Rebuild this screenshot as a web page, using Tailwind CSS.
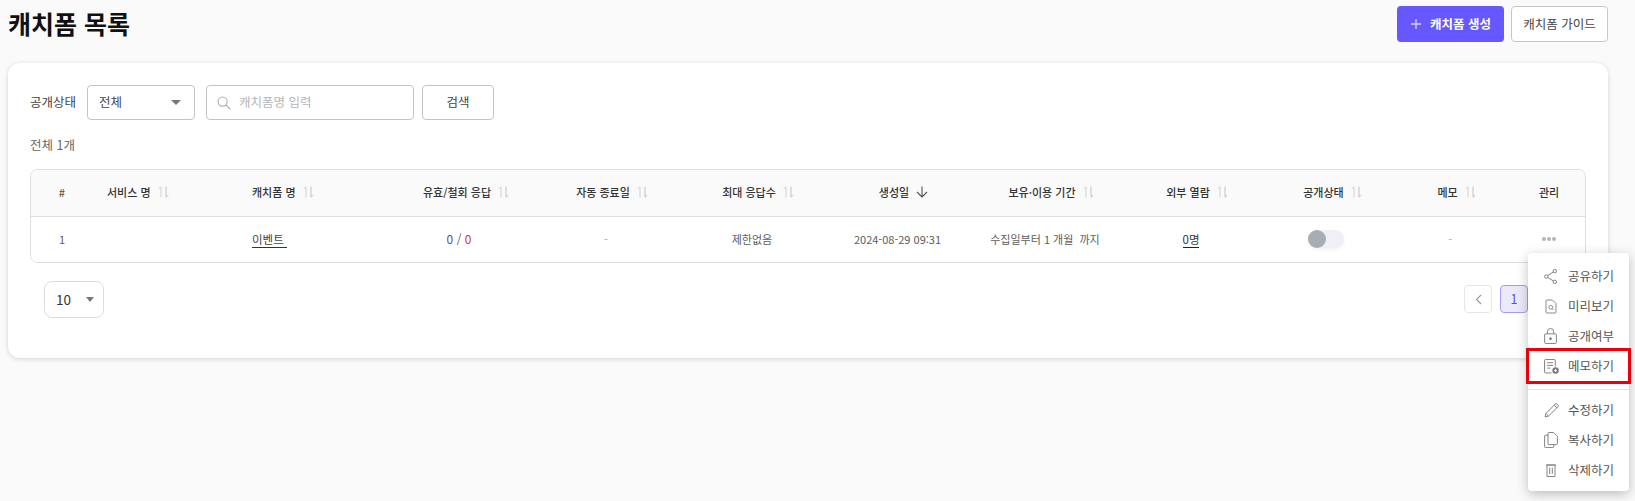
<!DOCTYPE html>
<html lang="ko">
<head>
<meta charset="utf-8">
<script src="https://cdn.jsdelivr.net/npm/@tailwindcss/browser@4"></script>
</head>
<body class="bg-[#fafafa] font-['Noto_Sans_CJK_KR','Noto_Sans',sans-serif] text-[#333]">
<div class="relative w-[1635px] h-[501px] overflow-hidden">
  <div class="pl-2 pr-[27px] pt-[6px]">
    <header class="flex justify-between h-[36px]">
      <h1 class="text-[25px] leading-[36px] font-bold text-[#111] mt-[-1px]">캐치폼 목록</h1>
      <div class="flex gap-[7px]">
        <button class="w-[107px] h-[36px] rounded bg-[#6657ff] text-white text-[12.5px] font-bold flex items-center justify-center gap-[8px]">
          <svg width="12" height="12" viewBox="0 0 12 12" fill="none" stroke="#d9d5ff" stroke-width="1.3"><path d="M6 1v10M1 6h10"/></svg>
          <span>캐치폼 생성</span>
        </button>
        <button class="w-[97px] h-[36px] rounded border border-[#c8c8c8] bg-white text-[12.5px] text-[#444]">캐치폼 가이드</button>
      </div>
    </header>
    <main class="mt-[21px] h-[295px] rounded-xl bg-white shadow-[0_1px_5px_rgba(0,0,0,0.16)] pt-[22px] pl-[22px] pr-[22px]">
      <div class="flex items-center h-[35px]">
        <span class="text-[12.5px] text-[#444] w-[57px]">공개상태</span>
        <div class="w-[108px] h-[35px] rounded border border-[#c4c4c4] flex items-center justify-between pl-[11px] pr-[13px] text-[12.5px] text-[#444]">
          <span>전체</span>
          <span class="w-0 h-0 border-x-[5px] border-x-transparent border-t-[5px] border-t-[#777]"></span>
        </div>
        <div class="ml-[11px] w-[208px] h-[35px] rounded border border-[#c4c4c4] flex items-center pl-[10px] gap-[8px] text-[12.5px] text-[#b5b5b5]">
          <svg width="14" height="14" viewBox="0 0 14 14" fill="none" stroke="#aaa" stroke-width="1.1"><circle cx="5.6" cy="5.6" r="4.6"/><path d="M9 9l4.4 4.4"/></svg>
          <span>캐치폼명 입력</span>
        </div>
        <button class="ml-2 w-[72px] h-[35px] rounded border border-[#c4c4c4] text-[12.5px] text-[#444]">검색</button>
      </div>
      <p class="mt-[15px] text-[12.5px] leading-[20px] text-[#666]">전체 1개</p>
      <div class="mt-[14px] w-[1556px] h-[94px] rounded-lg border border-[#dedede] overflow-hidden">
        <div class="h-[47px] pb-[2px] bg-[#fafafa] border-b border-[#dedede] shadow-[0_2px_4px_rgba(0,0,0,0.03)] grid grid-cols-[62px_147px_147px_144px_150px_142px_149px_146px_146px_125px_123px_74px] items-center text-[11px] font-medium text-[#333]">
          <div class="text-center text-[#555]">#</div>
          <div class="flex items-center gap-[7px] pl-[14px]"><span>서비스 명</span>
            <svg width="11" height="12" viewBox="0 0 11 12" fill="none" stroke-width="1"><path d="M3 11.5V.8L.6 3" stroke="#d0d0d0"/><path d="M8 .5v10.7l2.4-2.2" stroke="#c2c2c2"/></svg></div>
          <div class="flex items-center gap-[7px] pl-[12px]"><span>캐치폼 명</span>
            <svg width="11" height="12" viewBox="0 0 11 12" fill="none" stroke-width="1"><path d="M3 11.5V.8L.6 3" stroke="#d0d0d0"/><path d="M8 .5v10.7l2.4-2.2" stroke="#c2c2c2"/></svg></div>
          <div class="flex items-center justify-center gap-[7px] pl-[14px]"><span>유효/철회 응답</span>
            <svg width="11" height="12" viewBox="0 0 11 12" fill="none" stroke-width="1"><path d="M3 11.5V.8L.6 3" stroke="#d0d0d0"/><path d="M8 .5v10.7l2.4-2.2" stroke="#c2c2c2"/></svg></div>
          <div class="flex items-center justify-center gap-[7px] pl-[12px]"><span>자동 종료일</span>
            <svg width="11" height="12" viewBox="0 0 11 12" fill="none" stroke-width="1"><path d="M3 11.5V.8L.6 3" stroke="#d0d0d0"/><path d="M8 .5v10.7l2.4-2.2" stroke="#c2c2c2"/></svg></div>
          <div class="flex items-center justify-center gap-[7px] pl-[12px]"><span>최대 응답수</span>
            <svg width="11" height="12" viewBox="0 0 11 12" fill="none" stroke-width="1"><path d="M3 11.5V.8L.6 3" stroke="#d0d0d0"/><path d="M8 .5v10.7l2.4-2.2" stroke="#c2c2c2"/></svg></div>
          <div class="flex items-center justify-center gap-[7px] pl-[12px]"><span>생성일</span>
            <svg width="12" height="12" viewBox="0 0 12 12" fill="none" stroke="#555" stroke-width="1.1"><path d="M6 .5v10.5M1 6l5 5 5-5"/></svg></div>
          <div class="flex items-center justify-center gap-[7px] pl-[12px]"><span>보유·이용 기간</span>
            <svg width="11" height="12" viewBox="0 0 11 12" fill="none" stroke-width="1"><path d="M3 11.5V.8L.6 3" stroke="#d0d0d0"/><path d="M8 .5v10.7l2.4-2.2" stroke="#c2c2c2"/></svg></div>
          <div class="flex items-center justify-center gap-[7px] pl-[12px]"><span>외부 열람</span>
            <svg width="11" height="12" viewBox="0 0 11 12" fill="none" stroke-width="1"><path d="M3 11.5V.8L.6 3" stroke="#d0d0d0"/><path d="M8 .5v10.7l2.4-2.2" stroke="#c2c2c2"/></svg></div>
          <div class="flex items-center justify-center gap-[7px] pl-[12px]"><span>공개상태</span>
            <svg width="11" height="12" viewBox="0 0 11 12" fill="none" stroke-width="1"><path d="M3 11.5V.8L.6 3" stroke="#d0d0d0"/><path d="M8 .5v10.7l2.4-2.2" stroke="#c2c2c2"/></svg></div>
          <div class="flex items-center justify-center gap-[7px] pl-[12px]"><span>메모</span>
            <svg width="11" height="12" viewBox="0 0 11 12" fill="none" stroke-width="1"><path d="M3 11.5V.8L.6 3" stroke="#d0d0d0"/><path d="M8 .5v10.7l2.4-2.2" stroke="#c2c2c2"/></svg></div>
          <div class="text-center">관리</div>
        </div>
        <div class="h-[45px] pb-[1px] bg-white grid grid-cols-[62px_147px_147px_144px_150px_142px_149px_146px_146px_125px_123px_74px] items-center text-[11px] text-[#5c5c5c]">
          <div class="text-center">1</div>
          <div></div>
          <div class="pl-[12px]"><span class="text-[11.5px] text-[#444] border-b border-[#333] pr-[3px] leading-[15px] inline-block">이벤트</span></div>
          <div class="text-center text-[12px]">0 / <span class="text-[#d0383c]">0</span></div>
          <div class="text-center text-[#aaa]">-</div>
          <div class="text-center">제한없음</div>
          <div class="text-center">2024-08-29 09:31</div>
          <div class="text-center">수집일부터 1 개월&nbsp; 까지</div>
          <div class="text-center"><span class="text-[11.5px] text-[#333] border-b border-[#222] inline-block leading-[15px]">0명</span></div>
          <div class="flex justify-center pr-[2px]"><div class="w-[36px] h-[18px] rounded-full bg-[#eff0f3] shadow-[0_2px_4px_rgba(0,0,0,0.05)]"><div class="w-[18px] h-[18px] rounded-full bg-[#a8acb6]"></div></div></div>
          <div class="text-center text-[#aaa]">-</div>
          <div class="flex justify-center gap-[1.5px]"><i class="w-[3.5px] h-[3.5px] rounded-full bg-[#b5b5b5]"></i><i class="w-[3.5px] h-[3.5px] rounded-full bg-[#b5b5b5]"></i><i class="w-[3.5px] h-[3.5px] rounded-full bg-[#b5b5b5]"></i></div>
        </div>
      </div>
      <div class="mt-[18px] flex justify-between pl-[14px] w-[1556px]">
        <div class="w-[60px] h-[37px] rounded-lg border border-[#dcdcdc] flex items-center justify-between pl-[11px] pr-[9px] text-[13.5px] text-[#333]">
          <span>10</span>
          <span class="w-0 h-0 border-x-[4.5px] border-x-transparent border-t-[5px] border-t-[#777]"></span>
        </div>
        <div class="flex gap-2 mt-1 mr-[22px]">
          <div class="w-[28px] h-[28px] rounded border border-[#e6e6e6] flex items-center justify-center">
            <svg width="7" height="11" viewBox="0 0 7 11" fill="none" stroke="#999" stroke-width="1.1"><path d="M6 1L1.5 5.5 6 10"/></svg>
          </div>
          <div class="w-[28px] h-[28px] rounded border border-[#a99cf0] bg-[#ece9fb] text-[#5b4fe0] text-[12.5px] flex items-center justify-center">1</div>
          <div class="w-[28px] h-[28px]"></div>
        </div>
      </div>
    </main>
  </div>

  <div class="absolute left-[1528px] top-[253px] w-[101px] h-[238px] rounded bg-white shadow-[0_3px_12px_rgba(0,0,0,0.25)] pt-[8px] text-[12.5px] text-[#555]">
    <div class="flex items-center h-[30px] pl-[16px] gap-[11px]">
      <svg class="w-[13px] h-[15px] shrink-0" viewBox="0 0 12 14" fill="none" stroke="#777" stroke-width="0.85"><circle cx="10" cy="2" r="1.6"/><circle cx="2" cy="7" r="1.6"/><circle cx="10" cy="12" r="1.6"/><path d="M8.6 2.9L3.4 6.1M3.4 7.9l5.2 3.2"/></svg>
      <span>공유하기</span>
    </div>
    <div class="flex items-center h-[30px] pl-[17px] gap-[11px]">
      <svg class="w-[12px] h-[15px] shrink-0" viewBox="0 0 12 14" fill="none" stroke="#777" stroke-width="0.85"><path d="M2 .5h5.5L11 4v8.5a1 1 0 01-1 1H2a1 1 0 01-1-1v-11a1 1 0 011-1z"/><circle cx="5.8" cy="7.8" r="1.9"/><path d="M7.2 9.2l1.5 1.5"/></svg>
      <span>미리보기</span>
    </div>
    <div class="flex items-center h-[30px] pl-[16px] gap-[11px]">
      <svg class="w-[13px] h-[16px] shrink-0" viewBox="0 0 12 15" fill="none" stroke="#777" stroke-width="0.85"><rect x=".5" y="5.5" width="11" height="9" rx="1"/><path d="M3 5.5V3.5a3 3 0 016 0v2"/><circle cx="6" cy="10" r=".9" fill="#777"/></svg>
      <span>공개여부</span>
    </div>
    <div class="relative flex items-center h-[30px] pl-[16px] gap-[10px]">
      <svg class="w-[15px] h-[15px] shrink-0 mr-[-1px]" viewBox="0 0 14 14" fill="none" stroke="#777" stroke-width="0.85"><path d="M7 13H1.5a1 1 0 01-1-1V1.5a1 1 0 011-1h8a1 1 0 011 1V7"/><path d="M3 3.5h5.5M3 6h5.5M3 8.5h3"/><circle cx="10.8" cy="10.8" r="3" fill="#777" stroke="none"/><path d="M9.3 10.8h3M10.8 9.3v3" stroke="#fff"/></svg>
      <span>메모하기</span>
      <div class="absolute left-[-2px] top-[-3px] w-[105px] h-[36px] border-[3px] border-[#e8000b]"></div>
    </div>
    <div class="h-px bg-[#e2e2e2] mt-[8px] mb-[5px]"></div>
    <div class="flex items-center h-[30px] pl-[16px] gap-[10px]">
      <svg class="w-[15px] h-[15px] shrink-0 mr-[-1px]" viewBox="0 0 14 14" fill="none" stroke="#777" stroke-width="0.85"><path d="M1 13l.8-3.2L10.5 1a1.2 1.2 0 011.7 0l.8.8a1.2 1.2 0 010 1.7L4.2 12.2 1 13zM1.8 9.8l2.4 2.4M9.5 2l2.5 2.5"/></svg>
      <span>수정하기</span>
    </div>
    <div class="flex items-center h-[30px] pl-[16px] gap-[11px]">
      <svg class="w-[14px] h-[16px] shrink-0 mr-[-1px]" viewBox="0 0 13 15" fill="none" stroke="#777" stroke-width="0.85"><path d="M4.5.5h4.5L12.5 4v7a.8.8 0 01-.8.8H4.5a.8.8 0 01-.8-.8V1.3a.8.8 0 01.8-.8z"/><path d="M3.7 3H1.3a.8.8 0 00-.8.8v10a.8.8 0 00.8.8h7a.8.8 0 00.8-.8v-2"/></svg>
      <span>복사하기</span>
    </div>
    <div class="flex items-center h-[30px] pl-[18px] gap-[12px]">
      <svg class="w-[10px] h-[13px] shrink-0" viewBox="0 0 10 13" fill="none" stroke="#777" stroke-width="0.9"><path d="M0 1h10M1 1h8v11.5H1zM3.7 3.5v6.5M6.3 3.5v6.5"/></svg>
      <span>삭제하기</span>
    </div>
  </div>
</div>
</body>
</html>
